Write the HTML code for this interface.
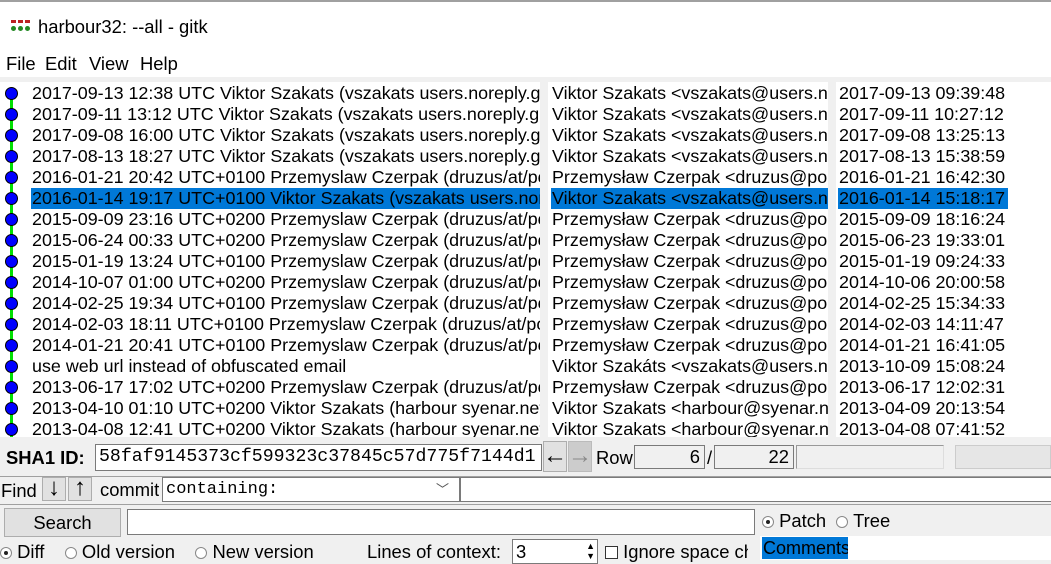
<!DOCTYPE html>
<html><head><style>
*{margin:0;padding:0;box-sizing:border-box}
body{width:1051px;height:560px;overflow:hidden;background:#f0f0f0;font-family:"Liberation Sans",sans-serif;font-size:18.4px;color:#000;position:relative}
.a{position:absolute;white-space:nowrap;overflow:hidden}
.pane{position:absolute;top:82px;height:355px;background:#fff;overflow:hidden;font-size:17.9px}
.row{position:absolute;height:21px;line-height:21px;white-space:nowrap;overflow:hidden}
.sel{background:#0078d7}
.dot{position:absolute;left:5px;width:13px;height:13px;border-radius:50%;background:#0000ff;border:1px solid #000}
.box{position:absolute;background:#fff;border:1px solid #7a7a7a}
.mono{font-family:"Liberation Mono",monospace}
.radio{display:inline-block;width:12px;height:12px;border:1px solid #888;border-radius:50%;background:#fff;vertical-align:-1px;position:relative}
.radio.on::after{content:"";position:absolute;left:3px;top:3px;width:4px;height:4px;border-radius:50%;background:#222}
.arr{position:absolute;text-align:center;font-size:24px;font-weight:bold}
</style></head><body>
<div class="a" style="left:0;top:0;width:1051px;height:45px;background:#fff;border-top:2px solid #a0a0a0"></div>
<div class="a" style="left:11px;top:20px;width:20px;height:12px">
<div style="position:absolute;left:0;top:0;width:5px;height:3px;background:#b22"></div>
<div style="position:absolute;left:7px;top:0;width:5px;height:3px;background:#b22"></div>
<div style="position:absolute;left:14px;top:0;width:5px;height:3px;background:#b22"></div>
<div style="position:absolute;left:0;top:6px;width:5px;height:5px;border-radius:50%;background:#282"></div>
<div style="position:absolute;left:7px;top:6px;width:5px;height:5px;border-radius:50%;background:#282"></div>
<div style="position:absolute;left:14px;top:6px;width:5px;height:5px;border-radius:50%;background:#282"></div>
</div>
<div class="a" style="left:38px;top:16px">harbour32: --all - gitk</div>
<div class="a" style="left:0;top:45px;width:1051px;height:32px;background:#fff"></div>
<div class="a" style="left:6px;top:53px">File</div>
<div class="a" style="left:45px;top:53px">Edit</div>
<div class="a" style="left:89px;top:53px">View</div>
<div class="a" style="left:140px;top:53px">Help</div>

<div class="pane" style="left:0;width:540px">
<div style="position:absolute;left:10px;top:10px;width:3px;height:345px;background:#00e000"></div>
<div id="g"></div>
</div>
<div class="pane" style="left:548px;width:280px" id="m"></div>
<div class="pane" style="left:836px;width:215px" id="d"></div>

<script>
var L=["2017-09-13 12:38 UTC Viktor Szakats (vszakats users.noreply.github.com)","2017-09-11 13:12 UTC Viktor Szakats (vszakats users.noreply.github.com)","2017-09-08 16:00 UTC Viktor Szakats (vszakats users.noreply.github.com)","2017-08-13 18:27 UTC Viktor Szakats (vszakats users.noreply.github.com)","2016-01-21 20:42 UTC+0100 Przemyslaw Czerpak (druzus/at/poczta.onet.pl)","2016-01-14 19:17 UTC+0100 Viktor Szakats (vszakats users.noreply.github.com)","2015-09-09 23:16 UTC+0200 Przemyslaw Czerpak (druzus/at/poczta.onet.pl)","2015-06-24 00:33 UTC+0200 Przemyslaw Czerpak (druzus/at/poczta.onet.pl)","2015-01-19 13:24 UTC+0100 Przemyslaw Czerpak (druzus/at/poczta.onet.pl)","2014-10-07 01:00 UTC+0200 Przemyslaw Czerpak (druzus/at/poczta.onet.pl)","2014-02-25 19:34 UTC+0100 Przemyslaw Czerpak (druzus/at/poczta.onet.pl)","2014-02-03 18:11 UTC+0100 Przemyslaw Czerpak (druzus/at/poczta.onet.pl)","2014-01-21 20:41 UTC+0100 Przemyslaw Czerpak (druzus/at/poczta.onet.pl)","use web url instead of obfuscated email","2013-06-17 17:02 UTC+0200 Przemyslaw Czerpak (druzus/at/poczta.onet.pl)","2013-04-10 01:10 UTC+0200 Viktor Szakats (harbour syenar.net)","2013-04-08 12:41 UTC+0200 Viktor Szakats (harbour syenar.net)"];
var V="Viktor Szakats &lt;vszakats@users.noreply.github.com&gt;",P="Przemysław Czerpak &lt;druzus@poczta.onet.pl&gt;",VA="Viktor Szakáts &lt;vszakats@users.noreply.github.com&gt;",H="Viktor Szakats &lt;harbour@syenar.net&gt;";
var M=[V,V,V,V,P,V,P,P,P,P,P,P,P,VA,P,H,H];
var D=["2017-09-13 09:39:48","2017-09-11 10:27:12","2017-09-08 13:25:13","2017-08-13 15:38:59","2016-01-21 16:42:30","2016-01-14 15:18:17","2015-09-09 18:16:24","2015-06-23 19:33:01","2015-01-19 09:24:33","2014-10-06 20:00:58","2014-02-25 15:34:33","2014-02-03 14:11:47","2014-01-21 16:41:05","2013-10-09 15:08:24","2013-06-17 12:02:31","2013-04-09 20:13:54","2013-04-08 07:41:52"];
var g="",m="",d="";
for(var i=0;i<17;i++){var t=i*21+1;var s=i==5?" sel":"";
g+='<div class="dot" style="top:'+(t+4)+'px"></div><div class="row'+s+'" style="left:31px;top:'+t+'px;width:520px;padding-left:1px">'+L[i]+'</div>';
m+='<div class="row'+s+'" style="left:3px;top:'+t+'px;width:290px;padding-left:1px">'+M[i]+'</div>';
d+='<div class="row'+s+'" style="left:2px;top:'+t+'px;width:170px;padding-left:1px">'+D[i]+'</div>';}
document.getElementById('g').innerHTML=g;document.getElementById('m').innerHTML=m;document.getElementById('d').innerHTML=d;
</script>

<div class="a" style="left:6px;top:447px;font-weight:bold">SHA1 ID:</div>
<div class="box mono" style="left:95px;top:444px;width:447px;height:27px;line-height:25px;padding-left:3px;font-size:18.2px;overflow:hidden">58faf9145373cf599323c37845c57d775f7144d1</div>
<div class="a" style="left:543px;top:441px;width:24px;height:31px;background:#e1e1e1;border:1px solid #adadad"></div>
<div class="arr" style="left:543px;top:442px;width:24px;line-height:28px">←</div>
<div class="a" style="left:568px;top:441px;width:24px;height:31px;background:#ccc;border:1px solid #bbb"></div>
<div class="arr" style="left:568px;top:442px;width:24px;line-height:28px;color:#888">→</div>
<div class="a" style="left:596px;top:447px">Row</div>
<div class="box" style="left:634px;top:445px;width:71px;height:24px;background:#f0f0f0;text-align:right;padding-right:4px;line-height:22px">6</div>
<div class="a" style="left:707px;top:447px">/</div>
<div class="box" style="left:714px;top:445px;width:80px;height:24px;background:#f0f0f0;text-align:right;padding-right:4px;line-height:22px">22</div>
<div class="box" style="left:796px;top:445px;width:148px;height:24px;background:#f0f0f0;border-color:#999 #ddd #ddd #999"></div>
<div class="a" style="left:955px;top:445px;width:96px;height:24px;background:#e6e6e6;border:1px solid #ccc"></div>
<div class="a" style="left:0;top:476px;width:1051px;height:1px;background:#a0a0a0"></div>

<div class="a" style="left:1px;top:480px">Find</div>
<div class="a" style="left:42px;top:477px;width:24px;height:24px;background:#e1e1e1;border:1px solid #adadad"></div>
<div class="arr" style="left:42px;top:476px;width:24px;line-height:24px">↓</div>
<div class="a" style="left:68px;top:477px;width:24px;height:24px;background:#e1e1e1;border:1px solid #adadad"></div>
<div class="arr" style="left:68px;top:476px;width:24px;line-height:24px">↑</div>
<div class="a" style="left:100px;top:479px">commit</div>
<div class="box mono" style="left:162px;top:477px;width:298px;height:25px;line-height:23px;padding-left:3px;font-size:17px">containing:<span style="position:absolute;right:10px;top:0;font-family:'Liberation Sans';color:#555;font-size:13px">﹀</span></div>
<div class="box" style="left:460px;top:477px;width:600px;height:25px"></div>
<div class="a" style="left:0;top:504px;width:1051px;height:1px;background:#a0a0a0"></div>

<div class="a" style="left:4px;top:508px;width:117px;height:29px;background:#e1e1e1;border:1px solid #adadad;text-align:center;line-height:27px">Search</div>
<div class="box" style="left:127px;top:509px;width:628px;height:26px"></div>
<div class="a" style="left:762px;top:510px"><span class="radio on"></span> Patch &nbsp;<span class="radio"></span> Tree</div>
<div class="a" style="left:0;top:541px"><span class="radio on"></span> Diff &nbsp;&nbsp;&nbsp;<span class="radio"></span> Old version &nbsp;&nbsp;&nbsp;<span class="radio"></span> New version</div>
<div class="a" style="left:367px;top:541px">Lines of context:</div>
<div class="box" style="left:512px;top:539px;width:86px;height:25px;padding-left:3px;line-height:23px">3<span style="position:absolute;right:2px;top:1px;font-size:9px;line-height:10px">▲<br>▼</span></div>
<div class="a" style="left:605px;top:541px;width:143px"><span style="display:inline-block;width:13px;height:13px;border:1px solid #333;background:#fff;vertical-align:-1px"></span> Ignore space ch</div>
<div class="a" style="left:760px;top:536px;width:291px;height:24px;background:#fff"></div>
<div class="a" style="left:762px;top:537px;height:22px;width:86px;background:#0078d7;padding:0 1px;line-height:22px;font-size:18px">Comments</div>
</body></html>
